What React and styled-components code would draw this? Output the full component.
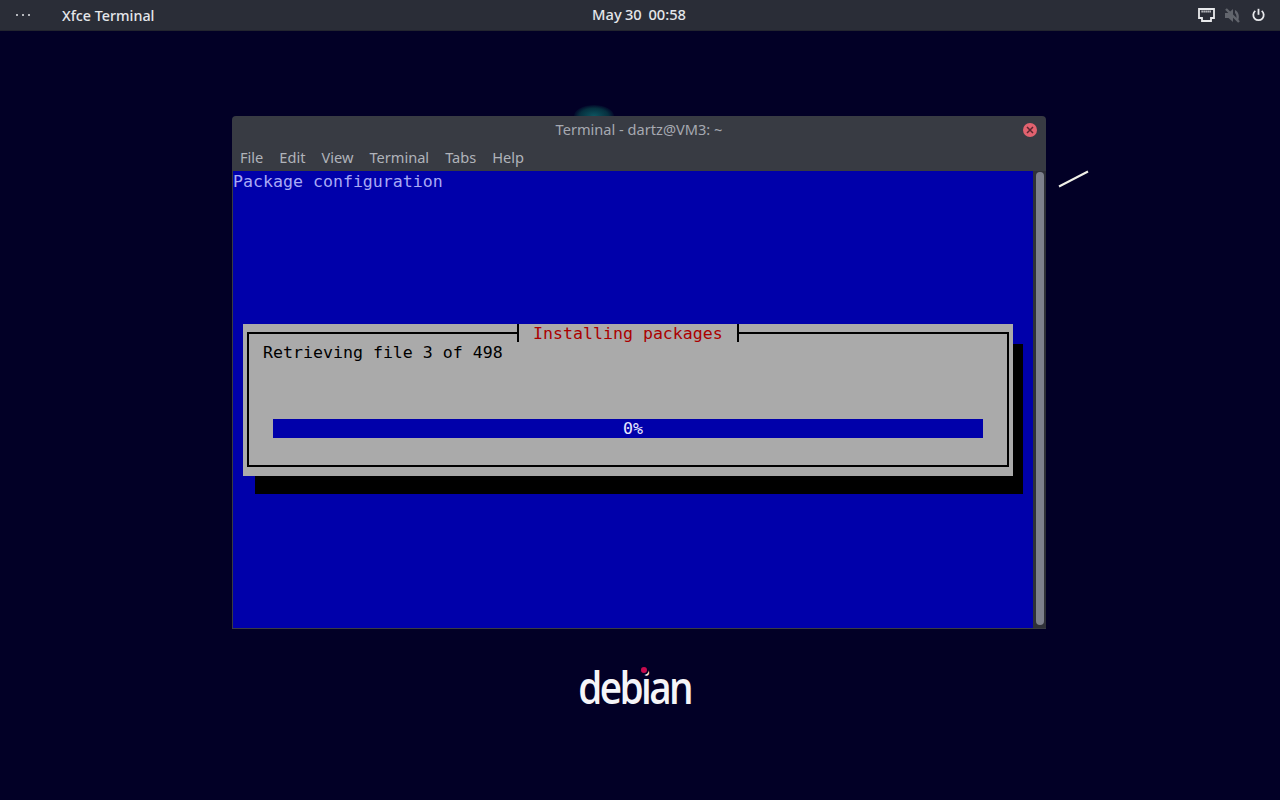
import React from 'react';
import styled, { createGlobalStyle } from 'styled-components';

const Global = createGlobalStyle`
  html, body { margin: 0; padding: 0; height: 100%; background: #020026; overflow: hidden; }
  #root { height: 100%; }
`;

const Screen = styled.div`
  width: 1280px;
  height: 800px;
  display: flex;
  flex-direction: column;
  background: #020026;
`;

const TopBar = styled.header`
  height: 30px;
  flex: none;
  display: flex;
  align-items: center;
  justify-content: space-between;
  padding: 0 15px 0 16px;
  background: #2a2d37;
  border-bottom: 1px solid #23252f;
  color: #e4e6ea;
  font-family: 'Noto Sans', sans-serif;
  font-size: 14.3px;
  font-weight: 500;
  position: relative;
`;

const BarLeft = styled.div`
  display: flex;
  align-items: center;
  gap: 29px;
`;

const Dots = styled.div`
  display: flex;
  gap: 4px;
  width: 17px;
`;

const Dot = styled.i`
  width: 2px;
  height: 2px;
  border-radius: 50%;
  background: #e4e6ea;
`;

const Clock = styled.div`
  position: absolute;
  left: 592px;
  top: 4px;
  font-size: 14.7px;
  word-spacing: -0.5px;
  white-space: pre;
`;

const Tray = styled.div`
  display: flex;
  align-items: center;
  gap: 10px;
`;

const Desktop = styled.main`
  flex: 1;
  position: relative;
  display: flex;
  flex-direction: column;
  align-items: center;
  padding-top: 85px;
`;

const Smudge = styled.div`
  position: absolute;
  left: 574px;
  top: 74px;
  width: 40px;
  height: 22px;
  border-radius: 50%;
  background: radial-gradient(ellipse at center, #0c5560 0%, #06303f 50%, transparent 75%);
`;

const Stroke = styled.svg`
  position: absolute;
  left: 1056px;
  top: 138px;
`;

const Window = styled.section`
  position: relative;
  width: 814px;
  height: 513px;
  margin-right: 2px;
  display: flex;
  flex-direction: column;
  background: #383b43;
  border-radius: 4px 4px 0 0;
  font-family: 'Noto Sans', sans-serif;
  color: #b0b3ba;
  font-size: 14.6px;
`;

const TitleBar = styled.div`
  height: 25px;
  padding-bottom: 2px;
  flex: none;
  display: flex;
  align-items: center;
  justify-content: center;
  color: #a6a9b1;
  position: relative;
`;

const Close = styled.button`
  position: absolute;
  right: 9px;
  top: 7px;
  width: 14px;
  height: 14px;
  padding: 0;
  border: 0;
  border-radius: 50%;
  background: #e2626f;
  display: flex;
  align-items: center;
  justify-content: center;
`;

const MenuBar = styled.nav`
  height: 28px;
  flex: none;
  display: flex;
  align-items: center;
  gap: 16px;
  padding: 0 8px;
`;

const WindowBody = styled.div`
  flex: 1;
  display: flex;
  padding: 0 0 1px 1px;
  min-height: 0;
`;

const Term = styled.div`
  width: 800px;
  flex: none;
  background: #0000aa;
  font-family: 'DejaVu Sans Mono', monospace;
  font-size: 16.6px;
  line-height: 19px;
  display: flex;
  flex-direction: column;
`;

const Caption = styled.div`
  height: 19px;
  padding-top: 1px;
  margin-bottom: 133px;
  color: #a9a9f5;
  white-space: pre;
`;

const Dialog = styled.div`
  position: relative;
  width: 770px;
  height: 152px;
  margin-left: 10px;
  box-sizing: border-box;
  padding: 8px 4px 9px;
  background: #aaaaaa;
  box-shadow: 11px 19px 0 -1px #000;
`;

const Frame = styled.div`
  height: 100%;
  box-sizing: border-box;
  border: 2px solid #000;
  padding: 9px 14px 0;
  color: #000;
`;

const DialogTitle = styled.div`
  position: absolute;
  top: 0;
  left: 274px;
  height: 18px;
  padding: 0 14px;
  background: #aaaaaa;
  border-left: 2px solid #000;
  border-right: 2px solid #000;
  color: #aa0000;
  white-space: pre;
`;

const StatusLine = styled.div`
  height: 19px;
  white-space: pre;
`;

const Progress = styled.div`
  width: 700px;
  height: 19px;
  margin: 57px 0 0 10px;
  padding-left: 10px;
  background: #0000aa;
  color: #e8e8ff;
  text-align: center;
`;

const Scrollbar = styled.div`
  flex: 1;
  padding: 1px 2px 3px 3px;
  background: #2f3138;
  display: flex;
`;

const Thumb = styled.div`
  flex: 1;
  border-radius: 4px;
  background: #7d808c;
`;

const Logo = styled.div`
  position: relative;
  margin-top: 30px;
  margin-right: 10px;
  font-family: 'Open Sans', sans-serif;
  font-size: 45px;
  font-weight: 600;
  line-height: 56px;
  letter-spacing: -3px;
  color: #f5f5f8;
  transform: scaleX(0.86);
`;

const LogoDot = styled.span`
  position: absolute;
  left: 73px;
  top: 8px;
  width: 7px;
  height: 6px;
  border-radius: 50%;
  background: #c70a4e;
  box-shadow: 0 0 0 2px #020026;
`;

const PowerSvg = styled.svg`
  margin-left: 2px;
`;

function NetworkIcon() {
  return (
    <svg width="17" height="14" viewBox="0 0 17 14">
      <path d="M1 1h15v9h-3v3H4v-3H1z" fill="none" stroke="#e8e9ec" strokeWidth="1.800" />
      <path d="M3.500 3.500h10" stroke="#e8e9ec" strokeWidth="2" strokeDasharray="1.200 .8" />
    </svg>
  );
}

function MutedIcon() {
  return (
    <svg width="15" height="15" viewBox="0 0 15 15" fill="#62656d">
      <path d="M0 5h3.500L8 1v13l-4.500-4H0z" />
      <path d="M10 2c3.500 1.500 5 6.500 3 11l-2-1.500c1-2.500.5-5-1-6.500z" />
      <path d="M1 1l13 13" stroke="#62656d" strokeWidth="2.400" />
    </svg>
  );
}

function PowerIcon() {
  return (
    <PowerSvg width="13" height="14" viewBox="0 0 13 14" fill="none" stroke="#e8e9ec" strokeWidth="1.800">
      <path d="M6.500.8v6" />
      <path d="M3.300 2.900a5.200 5.200 0 1 0 6.400 0" />
    </PowerSvg>
  );
}

export default function App() {
  return (
    <Screen>
      <Global />
      <TopBar>
        <BarLeft>
          <Dots><Dot /><Dot /><Dot /></Dots>
          <span>Xfce Terminal</span>
        </BarLeft>
        <Clock>May 30  00:58</Clock>
        <Tray>
          <NetworkIcon />
          <MutedIcon />
          <PowerIcon />
        </Tray>
      </TopBar>
      <Desktop>
        <Smudge />
        <Stroke width="34" height="20" viewBox="0 0 34 20">
          <path d="M3 17.500L32 2.500" stroke="#f1f1e8" strokeWidth="2" />
        </Stroke>
        <Window>
          <TitleBar>
            Terminal - dartz@VM3: ~
            <Close aria-label="Close">
              <svg width="8" height="8" viewBox="0 0 8 8">
                <path d="M1 1l6 6M7 1l-6 6" stroke="#5b2530" strokeWidth="1.500" />
              </svg>
            </Close>
          </TitleBar>
          <MenuBar>
            <span>File</span>
            <span>Edit</span>
            <span>View</span>
            <span>Terminal</span>
            <span>Tabs</span>
            <span>Help</span>
          </MenuBar>
          <WindowBody>
            <Term>
              <Caption>Package configuration</Caption>
              <Dialog>
                <DialogTitle>Installing packages</DialogTitle>
                <Frame>
                  <StatusLine>Retrieving file 3 of 498</StatusLine>
                  <Progress>0%</Progress>
                </Frame>
              </Dialog>
            </Term>
            <Scrollbar><Thumb /></Scrollbar>
          </WindowBody>
        </Window>
        <Logo>
          debian
          <LogoDot />
        </Logo>
      </Desktop>
    </Screen>
  );
}
